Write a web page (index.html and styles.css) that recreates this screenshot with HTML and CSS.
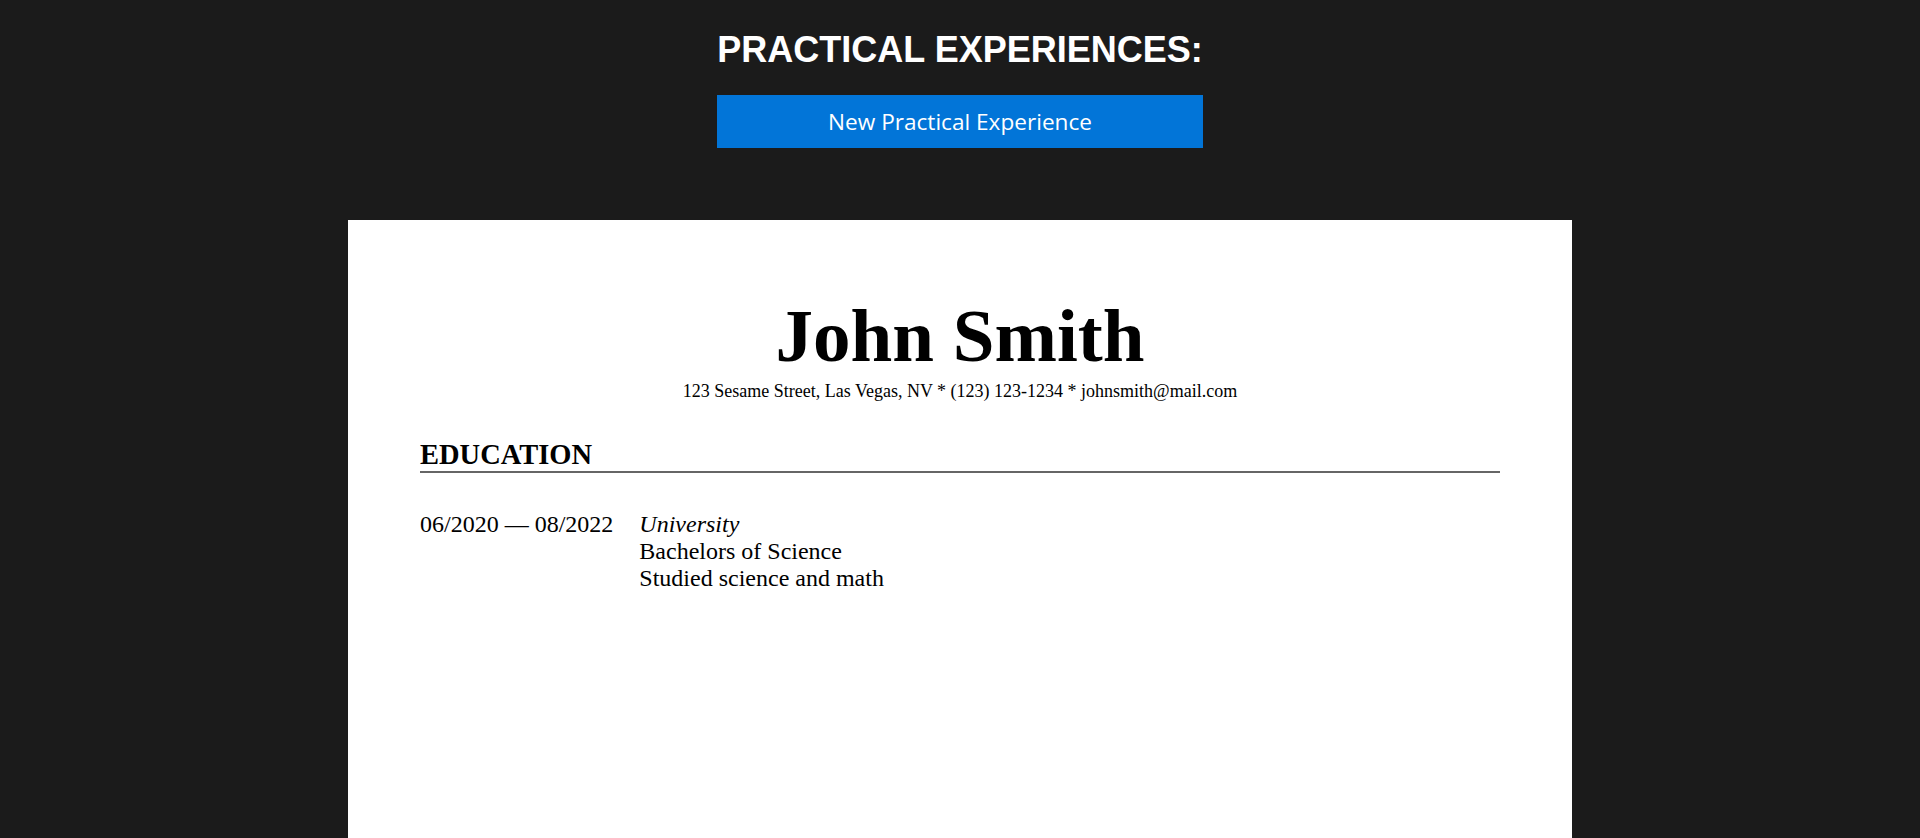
FILE: index.html
```html
<!DOCTYPE html>
<html lang="en">
<head>
<meta charset="utf-8">
<title>Resume Builder</title>
<link rel="stylesheet" href="styles.css">
</head>
<body>
<div class="editor">
  <div class="section-editor">
    <h1 class="section-title">PRACTICAL EXPERIENCES:</h1>
    <button class="add-btn" type="button">New Practical Experience</button>
  </div>
</div>
<main class="paper">
  <header class="resume-head">
    <h2 class="name">John Smith</h2>
    <p class="contact">123 Sesame Street, Las Vegas, NV * (123) 123-1234 * johnsmith@mail.com</p>
  </header>
  <section class="resume-section">
    <h3 class="section-heading">EDUCATION</h3>
    <div class="entry">
      <div class="entry-dates">06/2020 — 08/2022</div>
      <div class="entry-body">
        <div class="entry-place">University</div>
        <div>Bachelors of Science</div>
        <div>Studied science and math</div>
      </div>
    </div>
  </section>
</main>
</body>
</html>
```
FILE: styles.css
```css
html, body {
  margin: 0;
  padding: 0;
}
body {
  background: #1b1b1b;
  overflow: hidden;
}
.editor {
  display: flex;
  justify-content: center;
  padding-top: 29px;
}
.section-editor {
  display: flex;
  flex-direction: column;
  width: max-content;
}
.section-title {
  margin: 0;
  font-family: "Liberation Sans", Arial, sans-serif;
  font-weight: bold;
  font-size: 36px;
  color: #ffffff;
  text-align: center;
}
.add-btn {
  margin-top: 24px;
  height: 53px;
  border: none;
  background: #0275d8;
  color: #ffffff;
  font-family: "Open Sans", sans-serif;
  font-size: 22.6px;
  padding: 0;
  cursor: pointer;
}
.paper {
  width: 1224px;
  box-sizing: border-box;
  margin: 72px auto 0;
  background: #ffffff;
  padding: 73px 72px 400px;
  color: #000000;
  font-family: "Liberation Serif", "Times New Roman", serif;
}
.resume-head {
  text-align: center;
}
.name {
  margin: 0;
  font-size: 75px;
  font-weight: bold;
}
.contact {
  margin: 2px 0 0;
  font-size: 18px;
}
.resume-section {
  margin-top: 37px;
}
.section-heading {
  margin: 0;
  font-size: 28.5px;
  font-weight: bold;
  border-bottom: 2px solid #666666;
}
.entry {
  display: flex;
  gap: 26px;
  margin-top: 38px;
  font-size: 24px;
}
.entry-place {
  font-style: italic;
}
```
